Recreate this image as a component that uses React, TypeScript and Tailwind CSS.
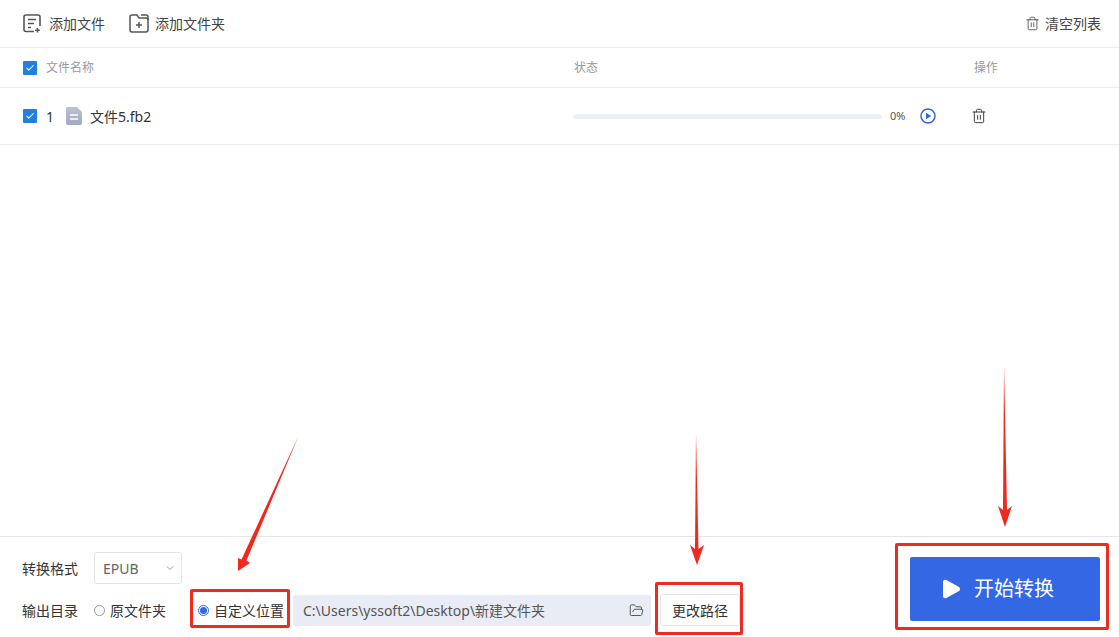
import { Trash2, ChevronDown, FolderOpen, Check } from "lucide-react";

const font = "font-['Noto_Sans','Noto_Sans_CJK_SC',sans-serif]";

function CheckBox() {
  return (
    <span className="flex h-[14px] w-[14px] items-center justify-center rounded-[1px] bg-[#1f7fe5]">
      <Check size={10} strokeWidth={2.5} className="text-white" />
    </span>
  );
}

function AddFileIcon() {
  return (
    <svg width="19" height="19" viewBox="0 0 19 19" fill="none" stroke="#555" strokeWidth="1.6">
      <path d="M11 17.500H3a2 2 0 0 1-2-2V3a2 2 0 0 1 2-2h12a2 2 0 0 1 2 2v9" />
      <path d="M5 5.500h8M5 9.500h6M5 13.500h3M14.500 14v4.500M12.200 16.200h4.600" />
    </svg>
  );
}

function AddFolderIcon() {
  return (
    <svg width="20" height="19" viewBox="0 0 20 19" fill="none" stroke="#555" strokeWidth="1.5">
      <path d="M1 3a2 2 0 0 1 2-2h5l2 3h7.500A1.500 1.500 0 0 1 19 5.500V16a2 2 0 0 1-2 2H3a2 2 0 0 1-2-2z" />
      <path d="M12 1h5a2 2 0 0 1 2 2v3M10 8v6M7 11h6" />
    </svg>
  );
}

function FileIcon() {
  return (
    <svg width="16" height="18" viewBox="0 0 16 18">
      <defs>
        <linearGradient id="fileFill" x1="0" y1="0" x2="0" y2="1">
          <stop offset="0" stopColor="#bcc1d2" />
          <stop offset="1" stopColor="#a3a9c0" />
        </linearGradient>
      </defs>
      <path d="M2 0h9l5 5v11a2 2 0 0 1-2 2H2a2 2 0 0 1-2-2V2a2 2 0 0 1 2-2z" fill="url(#fileFill)" />
      <path d="M4 8h8M4 12h8" stroke="#fff" strokeWidth="1.4" />
    </svg>
  );
}

function PlayCircle() {
  return (
    <svg width="16" height="16" viewBox="0 0 16 16">
      <circle cx="8" cy="8" r="7" fill="none" stroke="#3367d6" strokeWidth="1.5" />
      <path d="M6 4.800v6.400L11.200 8z" fill="#3367d6" />
    </svg>
  );
}

function Radio({ on }: { on?: boolean }) {
  return (
    <span
      className={`flex h-[11px] w-[11px] items-center justify-center rounded-full border bg-white ${
        on ? "border-[#3367e3]" : "border-[#999]"
      }`}
    >
      {on && <span className="h-[7px] w-[7px] rounded-full bg-[#3367e3]" />}
    </span>
  );
}

function Annotations() {
  return (
    <>
      <div className="absolute left-[190px] top-[589px] h-[39px] w-[100px] rounded-[2px] border-[3px] border-[#ee2b20]" />
      <div className="absolute left-[655px] top-[582px] h-[53px] w-[88px] rounded-[2px] border-[3px] border-[#ee2b20]" />
      <div className="absolute left-[895px] top-[543px] h-[87px] w-[214px] rounded-[2px] border-[3px] border-[#ee2b20]" />
      <svg className="absolute left-0 top-0" width="1119" height="637" fill="#f0291e">
        <path d="M298.500 436 L246.500 560.500 L250 563 L238 571 L238 558 L241.500 559.500 Z" />
        <path d="M696 433 L698.500 549 L704 545 L697 565 L690 545 L695 549 Z" />
        <path d="M1004 366 L1007 510 L1012 506 L1005 527 L998 506 L1003 510 Z" />
      </svg>
    </>
  );
}

export default function App() {
  return (
    <div className={`relative flex h-[637px] w-[1119px] flex-col overflow-hidden bg-white ${font}`}>
      {/* Toolbar */}
      <div className="flex h-[48px] items-center border-b border-[#e9ecf3] pl-[23px] pr-[18px] text-[14px] text-[#444]">
        <div className="flex items-center gap-[7px]">
          <AddFileIcon />
          <span>添加文件</span>
        </div>
        <div className="ml-[24px] flex items-center gap-[6px]">
          <AddFolderIcon />
          <span>添加文件夹</span>
        </div>
        <div className="ml-auto flex items-center gap-[5px]">
          <Trash2 size={15} strokeWidth={1.3} className="text-[#444]" />
          <span>清空列表</span>
        </div>
      </div>

      {/* Table header */}
      <div className="flex h-[40px] items-center border-b border-[#ebebeb] pl-[23px] text-[12px] text-[#999]">
        <div className="flex w-[551px] items-center gap-[9px]">
          <CheckBox />
          <span className="pt-[1px]">文件名称</span>
        </div>
        <div className="w-[400px] pt-[1px]">状态</div>
        <div className="pt-[1px]">操作</div>
      </div>

      {/* File row */}
      <div className="flex h-[57px] items-center border-b border-[#ebebeb] pl-[23px] text-[#333]">
        <div className="flex w-[550px] items-center">
          <CheckBox />
          <span className="ml-[9px] w-[20px] text-[14px]">1</span>
          <FileIcon />
          <span className="ml-[8px] text-[14px]">文件5.fb2</span>
        </div>
        <div className="h-[5px] w-[309px] rounded-full bg-[#edf0f6]" />
        <span className="ml-[8px] w-[30px] text-[11px] text-[#555]">0%</span>
        <PlayCircle />
        <Trash2 size={16} strokeWidth={1.4} className="ml-[35px] text-[#333]" />
      </div>

      {/* Bottom panel */}
      <div className="mt-auto flex h-[101px] border-t border-[#e6e6e6] pl-[22px] pr-[19px] text-[14px] text-[#333]">
        <div className="flex flex-col pt-[15px]">
          <div className="flex items-center">
            <span className="w-[72px]">转换格式</span>
            <div className="flex h-[32px] w-[88px] items-center justify-between rounded-[3px] border border-[#e4e4e4] pl-[8px] pr-[5px] text-[14px] text-[#666]">
              <span>EPUB</span>
              <ChevronDown size={12} className="text-[#999]" />
            </div>
          </div>
          <div className="mt-[10px] flex h-[32px] items-center">
            <span className="w-[72px]">输出目录</span>
            <Radio />
            <span className="ml-[5px] w-[88px]">原文件夹</span>
            <Radio on />
            <span className="ml-[5px]">自定义位置</span>
            <div className="ml-[9px] flex h-[31px] w-[358px] items-center justify-between rounded-[3px] bg-[#e9ecf4] pl-[10px] pr-[7px] text-[#555]">
              <span>C:\Users\yssoft2\Desktop\新建文件夹</span>
              <FolderOpen size={15} strokeWidth={1.4} className="text-[#444]" />
            </div>
            <div className="ml-[9px] flex h-[32px] w-[80px] items-center justify-center rounded-[3px] border border-[#e4e4e4]">
              更改路径
            </div>
          </div>
        </div>
        <button className="ml-auto mt-[20px] flex h-[64px] w-[190px] items-center justify-center gap-[13px] rounded-[2px] bg-[#3367e3] pr-[14px] text-[20px] text-white">
          <svg width="19" height="20" viewBox="0 0 19 20">
            <path d="M1 3 Q1 0 4 0.800 L17 8 Q19 10 17 12 L4 19.200 Q1 20 1 17 Z" fill="#fff" />
          </svg>
          <span>开始转换</span>
        </button>
      </div>

      <Annotations />
    </div>
  );
}
